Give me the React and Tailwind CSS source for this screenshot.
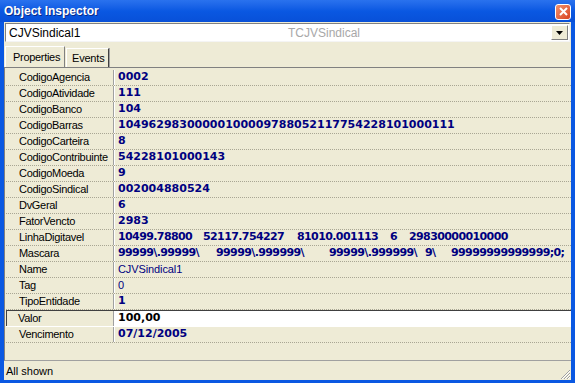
import React from "react";

const rows = [
  ["CodigoAgencia", "0002", "b"],
  ["CodigoAtividade", "111", "b"],
  ["CodigoBanco", "104", "b"],
  ["CodigoBarras", "10496298300000100009788052117754228101000111", "b"],
  ["CodigoCarteira", "8", "b"],
  ["CodigoContribuinte", "54228101000143", "b"],
  ["CodigoMoeda", "9", "b"],
  ["CodigoSindical", "002004880524", "b"],
  ["DvGeral", "6", "b"],
  ["FatorVencto", "2983", "b"],
  [
    "LinhaDigitavel",
    [
      ["10499.78800", "w-[85px]"],
      ["52117.754227", "w-[94px]"],
      ["81010.001113", "w-[93px]"],
      ["6", "w-[19px]"],
      ["29830000010000", ""],
    ],
    "seg",
  ],
  [
    "Mascara",
    [
      ["99999\\.99999\\", "w-[98px]"],
      ["99999\\.999999\\", "w-[113px]"],
      ["99999\\.999999\\", "w-[96px]"],
      ["9\\", "w-[26px]"],
      ["99999999999999;0;", ""],
    ],
    "seg",
  ],
  ["Name", "CJVSindical1", "n"],
  ["Tag", "0", "n"],
  ["TipoEntidade", "1", "b"],
  ["Valor", "100,00", "sel"],
  ["Vencimento", "07/12/2005", "b"],
];

const Row = ({ name, value, kind }) => {
  const sel = kind === "sel";
  let valueClass = "text-[#000080] text-[11px] tracking-[-0.1px]";
  if (sel) valueClass = "bg-white text-black font-['DejaVu_Sans'] font-bold text-[11px]";
  else if (kind === "b" || kind === "seg")
    valueClass = "text-[#000080] font-['DejaVu_Sans'] font-bold text-[11px]";
  return (
    <div
      className={
        "flex shrink-0 " +
        (sel
          ? "h-[17px] border-t border-t-[#404040] border-b border-b-white"
          : "h-[16px] border-b border-dotted border-[#a9a694]")
      }
    >
      <div
        className={
          "w-[108px] shrink-0 border-r border-[#a0a0a0] flex items-center text-[11px] tracking-[-0.3px] text-black " +
          (sel ? "border-l border-l-[#404040] pl-[11px]" : "pl-[13px]")
        }
      >
        {name}
      </div>
      <div className={"flex-1 pl-[3px] border-l border-white flex items-center whitespace-pre overflow-hidden " + valueClass}>
        {kind === "seg"
          ? value.map(([t, w], i) => (
              <span key={i} className={"shrink-0 tracking-[-0.6px] " + w}>
                {t}
              </span>
            ))
          : value}
      </div>
    </div>
  );
};

export default function App() {
  return (
    <div className="w-[575px] h-[383px] bg-[#0a58e2] flex flex-col font-['Liberation_Sans',sans-serif] overflow-hidden">
      <div className="h-[22px] shrink-0 flex items-center justify-between pl-[4px] pr-[4px] bg-gradient-to-b from-[#2a72ee] via-[#0a58e2] to-[#0850d8]">
        <span className="text-white font-bold text-[12px] [text-shadow:1px_1px_0_#0a2a8a]">
          Object Inspector
        </span>
        <div className="w-[16px] h-[16px] rounded-[3px] border border-white bg-gradient-to-br from-[#f0906c] to-[#d8401c] flex items-center justify-center mt-[1px]">
          <svg width="9" height="9" viewBox="0 0 9 9">
            <path d="M1 1 L8 8 M8 1 L1 8" stroke="white" strokeWidth="2" />
          </svg>
        </div>
      </div>

      <div className="flex-1 mx-[4px] mb-[5px] bg-[#eeebd6] flex flex-col">
        <div className="mx-[1px] mt-[1px] h-[19px] shrink-0 bg-white border-t border-l border-[#808080] border-b border-r border-b-[#f4f4f4] border-r-[#f4f4f4] flex items-center">
          <span className="pl-[3px] w-[282px] text-[12px] text-black">CJVSindical1</span>
          <span className="text-[12px] text-[#a8a8a8]">TCJVSindical</span>
          <div className="ml-auto mr-[1px] w-[17px] h-[15px] bg-[#eeebd6] border-r border-b border-[#808080] border-t border-l border-t-white border-l-white flex items-center justify-center">
            <svg width="7" height="4" viewBox="0 0 7 4">
              <path d="M0 0 H7 L3.5 4 Z" fill="black" />
            </svg>
          </div>
        </div>

        <div className="flex items-end h-[25px] shrink-0 pl-[1px]">
          <div className="h-[21px] w-[60px] pl-[7px] flex items-center border-t border-l border-white border-r border-r-[#808080] bg-[#eeebd6] text-[11px] tracking-[-0.3px] text-black">
            Properties
          </div>
          <div className="h-[19px] w-[43px] ml-[1px] pl-[5px] flex items-center border-t border-l border-white border-r border-r-[#404040] shadow-[1px_0_0_#a0a0a0] text-[11px] tracking-[-0.2px] text-black">
            Events
          </div>
        </div>

        <div className="h-[294px] shrink-0 border-t border-l border-[#808080] border-b border-b-[#a0a0a0] flex flex-col pt-[2px] pl-[1px]">
          {rows.map(([n, v, k]) => (
            <Row key={n} name={n} value={v} kind={k} />
          ))}
        </div>

        <div className="flex-1 flex items-center pl-[2px] pt-[2px] relative">
          <span className="text-[11px] text-black">All shown</span>
          <svg className="absolute right-0 bottom-0" width="12" height="12" viewBox="0 0 12 12">
            <path d="M11 2 L2 11 M11 5 L5 11 M11 8 L8 11" stroke="#a0a0a0" strokeWidth="1" />
            <path d="M11 3 L3 11 M11 6 L6 11 M11 9 L9 11" stroke="white" strokeWidth="1" />
          </svg>
        </div>
      </div>
    </div>
  );
}
